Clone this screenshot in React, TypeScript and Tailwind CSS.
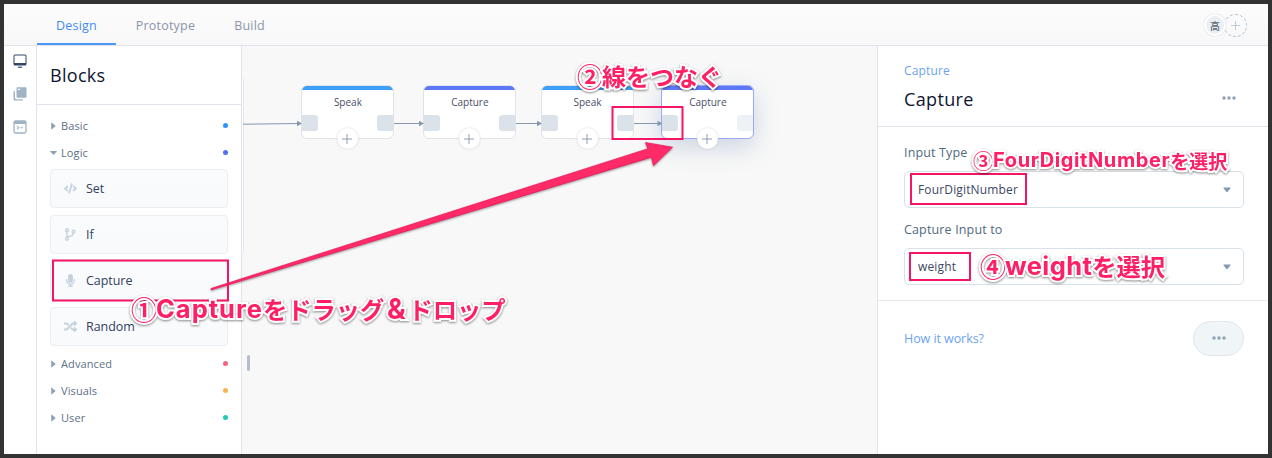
import type { ReactNode } from "react";
import { FaCode, FaMicrophone, FaRandom } from "react-icons/fa";

function Triangle({ down = false }: { down?: boolean }) {
  return (
    <svg className="h-2 w-[7px] shrink-0 text-[#8da2b5]" viewBox="0 0 7 8" fill="currentColor">
      {down ? (
        <path d="M.7 2h5.6q.8.1.3.8L4 5.6q-.5.5-1 0L.4 2.8Q-.1 2.1.7 2Z" />
      ) : (
        <path d="M1.2 .8v6.4q.1.4.6.1L5.2 4.4q.5-.4 0-.8L1.8.7q-.5-.3-.6.1Z" />
      )}
    </svg>
  );
}

function Category({ label, dot, open = false }: { label: string; dot: string; open?: boolean }) {
  return (
    <div className="flex h-[27px] items-center">
      <Triangle down={open} />
      <span className="ml-1 text-[11px] leading-[18px] font-medium tracking-[0.1px] text-[#5c7187]">{label}</span>
      <span className={`ml-auto size-[5px] rounded-full ${dot}`} />
    </div>
  );
}

function Block({ label, icon }: { label: string; icon: ReactNode }) {
  return (
    <div className="flex h-[39px] items-center rounded-[4px] border border-[#eaeff4] bg-gradient-to-b from-[#fafbfc] to-[#f8fafb] pl-[12px] text-[#c5d2de]">
      <span className="flex w-[14px] items-center justify-center">{icon}</span>
      <span className="ml-[9px] pt-[2px] text-[12.5px] tracking-[-0.05px] text-[#33415f]">{label}</span>
    </div>
  );
}

function Plus({ className }: { className: string }) {
  return (
    <svg className={className} viewBox="0 0 10 10" fill="none" stroke="currentColor" strokeWidth="1">
      <path d="M5 0v10M0 5h10" />
    </svg>
  );
}

function Node({ label, place, bar, active = false }: { label: string; place: string; bar: string; active?: boolean }) {
  return (
    <div className={`absolute top-[39px] h-[54px] w-[93px] ${place}`}>
      <div
        className={`relative h-full overflow-hidden rounded-[6px] border bg-white ${
          active ? "border-[#9ba9f6] shadow-[0_8px_24px_rgba(90,120,170,0.28)]" : "border-[#dfe4ea]"
        }`}
      >
        <div className={`-mx-px -mt-px h-[5px] ${bar}`} />
        <div className="pt-[4px] text-center text-[10px] leading-[16px] text-[#474e66]">{label}</div>
        <span className="absolute top-[29px] left-0 size-4 rounded-r-[3px] bg-[#dce2ea]" />
        <span className={`absolute top-[29px] right-0 size-4 rounded-l-[3px] ${active ? "bg-[#eef1f6]" : "bg-[#dce2ea]"}`} />
      </div>
      <span className="absolute top-[43px] left-[35.5px] flex size-[21px] items-center justify-center rounded-full bg-white text-[#8c9fb2] shadow-[0_0_2px_rgba(90,110,140,0.35)]">
        <Plus className="size-[10px]" />
      </span>
    </div>
  );
}

function Dots() {
  return (
    <svg className="h-1 w-[14px] text-[#8da2b5]" viewBox="0 0 14 4" fill="currentColor">
      <circle cx="2" cy="2" r="1.7" />
      <circle cx="7" cy="2" r="1.7" />
      <circle cx="12" cy="2" r="1.7" />
    </svg>
  );
}

function Select({ value }: { value: string }) {
  return (
    <div className="flex h-[37px] items-center justify-between rounded-[5px] border border-[#d9e1e8] pr-[12px] pl-[13px]">
      <span className="text-[12px] tracking-[0.15px] text-[#3c4763]">{value}</span>
      <svg className="h-[6px] w-[8px] text-[#8399af]" viewBox="0 0 8 6" fill="currentColor">
        <path d="M1 .5h6q1 .2.3 1.1L4.7 4.8q-.7.7-1.4 0L.7 1.6Q0 .7 1 .5Z" />
      </svg>
    </div>
  );
}

function Note({ className, children }: { className: string; children: ReactNode }) {
  return (
    <div
      className={`absolute flex items-center leading-none font-bold whitespace-nowrap text-[#ff1f64] [-webkit-text-stroke:4px_white] [filter:drop-shadow(0_1px_1px_rgba(0,0,0,0.45))] [font-family:'Noto_Sans_CJK_JP',sans-serif] [paint-order:stroke_fill] ${className}`}
    >
      {children}
    </div>
  );
}

export default function App() {
  return (
    <div className="relative flex h-[458px] w-[1272px] flex-col overflow-hidden border-4 border-[#333333] bg-white [font-family:'Open_Sans',sans-serif]">
      <header className="flex h-[42px] shrink-0 items-stretch border-b border-[#dfe4ed] bg-gradient-to-b from-[#fcfcfc] to-[#f8f8f9] pl-[33px] text-[12.5px] font-medium tracking-[0.2px] text-[#8c95ac]">
        <div className="flex w-[79px] items-center justify-center border-b-2 border-[#4f97f5] pt-[5px] text-[#448bf0]">Design</div>
        <div className="flex w-[99px] items-center justify-center pt-[3px]">Prototype</div>
        <div className="flex w-[69px] items-center justify-center pt-[3px]">Build</div>
        <div className="mr-[21px] ml-auto flex items-center pt-px tracking-normal">
          <span className="z-10 flex size-[22px] items-center justify-center rounded-full border-2 border-white bg-[#eceff1] text-[10px] font-medium text-[#596875] shadow-[0_0_1px_#aab4c0] [font-family:'Noto_Sans_CJK_JP',sans-serif]">
            高
          </span>
          <span className="-ml-[2px] flex size-[23px] items-center justify-center rounded-full border border-dashed border-[#b9c8d6] text-[#b9c8d6]">
            <Plus className="size-[9px]" />
          </span>
        </div>
      </header>

      <div className="flex min-h-0 flex-1">
        <nav className="flex w-[33px] shrink-0 flex-col items-center gap-[19px] border-r border-[#dfe4ed] pt-[8px] text-[#a0b3c3]">
          <svg className="size-[14px] text-[#354668]" viewBox="0 0 14 14" fill="currentColor">
            <path fillRule="evenodd" d="M2 .5h10Q13.5.5 13.5 2v8q0 1.5-1.5 1.5H2Q.5 11.5.5 10V2Q.5.5 2 .5ZM1.500 2v7h11V2q0-.5-.5-.5H2q-.5 0-.5.5Z" />
            <path d="M4.500 13.700q0-1.200 2.500-1.200t2.500 1.200Z" />
          </svg>
          <svg className="size-[14px]" viewBox="0 0 14 14" fill="currentColor">
            <path fillRule="evenodd" d="M4.500 .3H12.500q1 0 1 1v8.500q0 1-1 1H4.500q-1 0-1-1V1.300q0-1 1-1ZM4.800 1.700v1.200h2.400V1.700Z" />
            <path d="M.5 4.300h1.500v6.200Q2 12.200 3.500 12.200h6.500v1.300H2Q.5 13.500.5 12Z" />
          </svg>
          <svg className="size-[14px]" viewBox="0 0 14 14" fill="none" stroke="currentColor" strokeWidth="1.3">
            <rect x="1" y="1" width="12" height="12" rx="1.5" />
            <path d="M1 2.500h12" strokeWidth="3" />
            <path d="m4 6.200 1.800 1.500L4 9.200M7.500 7.700H10" strokeWidth="1.100" />
          </svg>
        </nav>

        <aside className="flex w-[205px] shrink-0 flex-col border-r border-[#dfe4ed]">
          <h1 className="flex h-[59px] items-center border-b border-[#dfe4ed] pl-[13px] text-[18px] font-medium tracking-[0.3px] text-[#0e1530]">Blocks</h1>
          <div className="pt-[7px] pr-[13px] pl-[13px]">
            <Category label="Basic" dot="bg-[#2a96f8]" />
            <Category label="Logic" dot="bg-[#5070f5]" open />
            <div className="mt-[3px] flex flex-col gap-[7px] pb-[4px]">
              <Block label="Set" icon={<FaCode size={13} />} />
              <Block
                label="If"
                icon={
                  <svg className="size-[13px]" viewBox="0 0 13 13" fill="none" stroke="currentColor" strokeWidth="1.400">
                    <circle cx="3" cy="2.200" r="1.400" />
                    <circle cx="3" cy="10.800" r="1.400" />
                    <circle cx="9.500" cy="3.700" r="1.400" />
                    <path d="M3 3.600v5.800M3 8.500q5.500.2 6.500-3.400" />
                  </svg>
                }
              />
              <Block label="Capture" icon={<FaMicrophone size={13} />} />
              <Block label="Random" icon={<FaRandom size={13} />} />
            </div>
            <Category label="Advanced" dot="bg-[#f5657f]" />
            <Category label="Visuals" dot="bg-[#f6b64d]" />
            <Category label="User" dot="bg-[#23c8b9]" />
          </div>
        </aside>

        <main className="relative flex-1 overflow-hidden bg-[#f8f8f8]">
          <div className="absolute top-[31px] -left-3 h-[179px] w-[14px] rounded-[4px] border border-[#e5e9ef] bg-white" />
          <div className="absolute top-[309px] left-[4.500px] h-4 w-[3px] rounded-full bg-[#b3bfce]" />
          <Node label="Speak" place="left-[59.400px]" bar="bg-[#3e9ff8]" />
          <Node label="Capture" place="left-[181.400px]" bar="bg-[#5d78f6]" />
          <Node label="Speak" place="left-[299px]" bar="bg-[#3e9ff8]" />
          <Node label="Capture" place="left-[419.400px]" bar="bg-[#5d78f6]" active />
          <svg className="absolute inset-0 h-full w-full text-[#8499ae]" fill="currentColor">
            <g stroke="currentColor" strokeWidth="1">
              <path d="M1 78.200 57 77.500M152 77.500h28M274 77.500h23M392 77.500h25" />
            </g>
            <path d="m55 74.800 5 2.700-5 2.700ZM177 74.800l5 2.700-5 2.700ZM295 74.800l5 2.700-5 2.700ZM415.500 74.800l5 2.700-5 2.700Z" />
          </svg>
        </main>

        <section className="w-[391px] shrink-0 border-l border-[#dfe4ed] bg-white">
          <div className="flex h-[81px] items-start justify-between border-b border-[#dfe4ed] pr-[32px] pl-[26px]">
            <div>
              <div className="pt-[16px] text-[12px] leading-[18px] tracking-[0.15px] text-[#6ca3ee]">Capture</div>
              <h2 className="pt-[7px] text-[18px] leading-[24px] font-medium tracking-[0.350px] text-[#0e1530]">Capture</h2>
            </div>
            <div className="pt-[50px]">
              <Dots />
            </div>
          </div>
          <div className="h-[174px] border-b border-[#e4e9ef] pr-[24px] pl-[26px]">
            <div className="flex h-[44px] items-center pt-[8px] text-[12.500px] tracking-[0.15px] text-[#526a80]">Input Type</div>
            <Select value="FourDigitNumber" />
            <div className="flex h-[40px] items-center pt-[5px] text-[12.500px] tracking-[0.15px] text-[#526a80]">Capture Input to</div>
            <Select value="weight" />
          </div>
          <div className="flex items-center justify-between pt-5 pr-[24px] pl-[26px]">
            <span className="pt-[2px] text-[12.500px] tracking-[-0.07px] text-[#6ca3ee]">How it works?</span>
            <span className="flex h-[35px] w-[51px] items-center justify-center rounded-full border border-[#dfe6ed] bg-[#f0f5f7] pb-[2px]">
              <Dots />
            </span>
          </div>
        </section>
      </div>

      <svg className="pointer-events-none absolute -top-1 -left-1 h-[458px] w-[1272px] [filter:drop-shadow(0_1px_1px_rgba(0,0,0,0.4))]" viewBox="0 0 1272 458">
        <path d="M211 288.500 648 148.700l-2.500-6.200 27 4.700-19 18.500-2-8.500L211 290Z" fill="#ff2b69" stroke="#ee1259" strokeWidth=".7" />
      </svg>
      <svg className="pointer-events-none absolute -top-1 -left-1 h-[458px] w-[1272px]" viewBox="0 0 1272 458">
        <g fill="none" stroke="#f51564" strokeWidth="2">
          <rect x="53" y="260.500" width="175" height="40" />
          <rect x="612.500" y="107" width="70" height="32" />
          <rect x="911" y="174" width="115" height="30" />
          <rect x="910" y="253" width="60" height="27" />
        </g>
      </svg>

      <Note className="top-[289px] left-[127px] h-8 text-[24.300px]">
        <span className="w-[25px] text-[26px]">①</span>
        <span className="text-[25.500px] font-bold tracking-[1px] [font-family:Inter,sans-serif]">Capture</span>
        <span>をドラッグ</span>
        <span className="w-[24px] text-center text-[28px] font-bold [font-family:Inter,sans-serif]">&amp;</span>
        <span>ドロップ</span>
      </Note>
      <Note className="top-[56px] left-[573px] h-8 text-[24px]">
        <span className="w-[25px] text-[26px]">②</span>
        <span>線をつなぐ</span>
      </Note>
      <Note className="top-[140px] left-[969px] h-8 text-[19px]">
        <span className="w-[20px] text-[20.500px]">③</span>
        <span className="text-[20px] font-bold tracking-[0.6px] [font-family:Inter,sans-serif]">FourDigitNumber</span>
        <span>を選択</span>
      </Note>
      <Note className="top-[246px] left-[976px] h-8 text-[24.300px]">
        <span className="w-[25px] text-[26px]">④</span>
        <span className="text-[25.500px] font-bold tracking-[0.4px] [font-family:Inter,sans-serif]">weight</span>
        <span>を選択</span>
      </Note>
    </div>
  );
}
